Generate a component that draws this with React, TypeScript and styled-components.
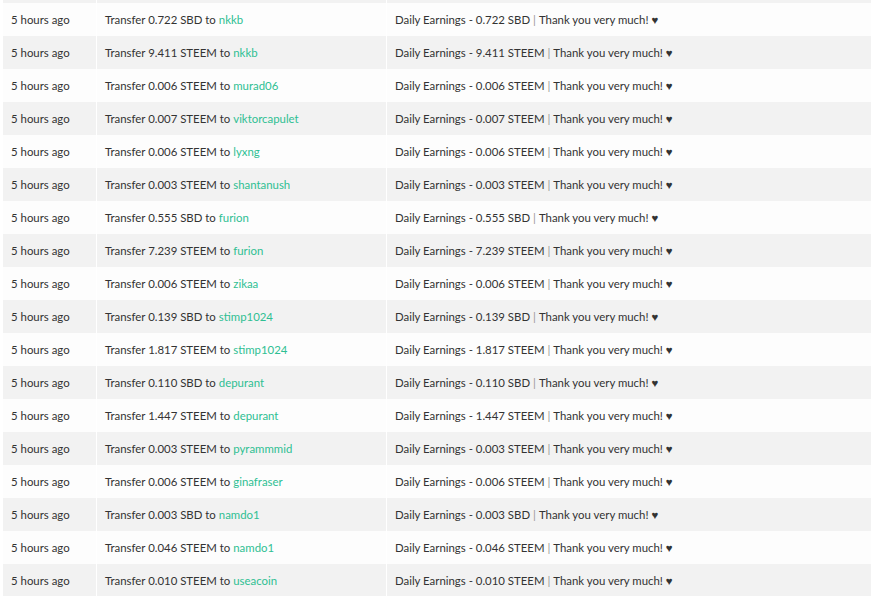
import React from "react";
import styled, { createGlobalStyle } from "styled-components";

const G = createGlobalStyle`
  body { margin: 0; background: #fff; font-family: Lato, "Open Sans", sans-serif; }
`;
const Table = styled.div`
  display: flex; flex-direction: column; padding-left: 3px; width: 868px;
`;
const Row = styled.div<{ $odd: boolean; $h?: number }>`
  display: grid; grid-template-columns: 93px 289px 1fr; column-gap: 1px;
  height: ${p => p.$h ?? 33}px;
  & > div { background: ${p => (p.$odd ? "#f2f2f2" : "#fdfdfd")}; }
`;
const Cell = styled.div`
  display: flex; align-items: center; padding-left: 8px;
  font-size: 11.4px; color: #333; white-space: nowrap;
`;
const Link = styled.span` color: #2fbf93; margin-left: 3px; `;
const Pipe = styled.span` color: #999; margin: 0 3px; `;

const data: [string, string, string][] = [
  ["0.722", "SBD", "nkkb"], ["9.411", "STEEM", "nkkb"], ["0.006", "STEEM", "murad06"],
  ["0.007", "STEEM", "viktorcapulet"], ["0.006", "STEEM", "lyxng"], ["0.003", "STEEM", "shantanush"],
  ["0.555", "SBD", "furion"], ["7.239", "STEEM", "furion"], ["0.006", "STEEM", "zikaa"],
  ["0.139", "SBD", "stimp1024"], ["1.817", "STEEM", "stimp1024"], ["0.110", "SBD", "depurant"],
  ["1.447", "STEEM", "depurant"], ["0.003", "STEEM", "pyrammmid"], ["0.006", "STEEM", "ginafraser"],
  ["0.003", "SBD", "namdo1"], ["0.046", "STEEM", "namdo1"], ["0.010", "STEEM", "useacoin"],
];

export default function App() {
  return (
    <>
      <G />
      <Table>
        <Row $odd $h={3}><div /><div /><div /></Row>
        {data.map(([a, c, u], i) => (
          <Row key={i} $odd={i % 2 === 1}>
            <Cell>5 hours ago</Cell>
            <Cell>Transfer {a} {c} to<Link>{u}</Link></Cell>
            <Cell>Daily Earnings - {a} {c}<Pipe>|</Pipe>Thank you very much! ♥</Cell>
          </Row>
        ))}
      </Table>
    </>
  );
}
